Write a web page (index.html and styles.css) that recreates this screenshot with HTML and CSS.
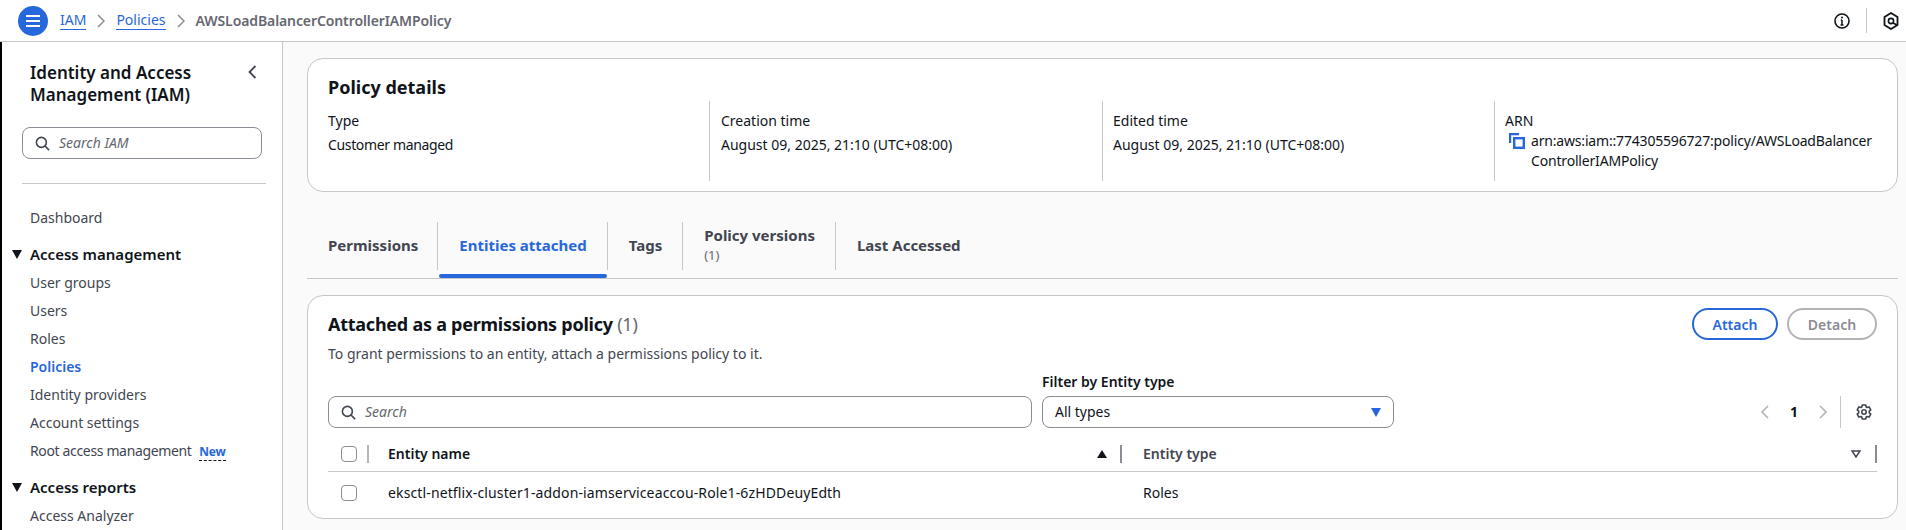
FILE: index.html
```html
<!DOCTYPE html>
<html lang="en">
<head>
  <meta charset="UTF-8">
  <meta name="viewport" content="width=device-width, initial-scale=1.0">
  <title>AWSLoadBalancerControllerIAMPolicy</title>
  <link rel="stylesheet" href="styles.css">
</head>
<body>

  <header class="topbar">
    <button class="menu-btn" aria-label="Menu">
      <svg width="16" height="14" viewBox="0 0 16 14"><path d="M1 2h14M1 7h14M1 12h14" stroke="#fff" stroke-width="2" fill="none"/></svg>
    </button>
    <nav class="crumbs">
      <a href="#">IAM</a>
      <svg width="8" height="14" viewBox="0 0 8 14"><path d="M1 1l6 6-6 6" stroke="#8c8c94" stroke-width="1.5" fill="none"/></svg>
      <a href="#">Policies</a>
      <svg width="8" height="14" viewBox="0 0 8 14"><path d="M1 1l6 6-6 6" stroke="#8c8c94" stroke-width="1.5" fill="none"/></svg>
      <span class="crumb-current">AWSLoadBalancerControllerIAMPolicy</span>
    </nav>
    <div class="top-tools">
      <svg width="16" height="16" viewBox="0 0 16 16"><circle cx="8" cy="8" r="7" stroke="#0f141a" stroke-width="1.6" fill="none"/><path d="M8 7v5M6.500 12h3M6.800 7H8" stroke="#0f141a" stroke-width="1.500" fill="none"/><circle cx="8" cy="4.500" r="1" fill="#0f141a"/></svg>
      <span class="tool-sep"></span>
      <svg width="16" height="18" viewBox="0 0 16 18"><path d="M8 1l6.500 4v8L8 17l-6.500-4V5z" stroke="#0f141a" stroke-width="1.800" fill="none"/><circle cx="8" cy="9" r="2.600" stroke="#0f141a" stroke-width="1.600" fill="none"/><path d="M10 11l4 2" stroke="#0f141a" stroke-width="1.600"/></svg>
    </div>
  </header>

  <div class="layout">
    <aside class="sidebar">
      <div class="side-head">
        <h2>Identity and Access Management (IAM)</h2>
        <svg class="side-close" width="9" height="14" viewBox="0 0 9 14"><path d="M7.500 1l-6 6 6 6" stroke="#424650" stroke-width="1.800" fill="none"/></svg>
      </div>
      <div class="side-search">
        <svg width="15" height="15" viewBox="0 0 16 16"><circle cx="6.800" cy="6.800" r="5.300" stroke="#424650" stroke-width="1.700" fill="none"/><path d="M10.700 10.700l4.300 4.300" stroke="#424650" stroke-width="1.700"/></svg>
        <span>Search IAM</span>
      </div>
      <hr class="side-rule">
      <a class="side-link side-dash" href="#">Dashboard</a>
      <div class="side-group"><span class="caret"></span>Access management</div>
      <a class="side-link" href="#">User groups</a>
      <a class="side-link" href="#">Users</a>
      <a class="side-link" href="#">Roles</a>
      <a class="side-link active" href="#">Policies</a>
      <a class="side-link" href="#">Identity providers</a>
      <a class="side-link" href="#">Account settings</a>
      <a class="side-link" href="#"><span class="tight">Root access management</span> <span class="new-tag">New</span></a>
      <div class="side-group"><span class="caret"></span>Access reports</div>
      <a class="side-link" href="#">Access Analyzer</a>
    </aside>

    <main class="content">
      <section class="card details">
        <h2>Policy details</h2>
        <div class="detail-cols">
          <div class="detail-col">
            <div class="detail-label">Type</div>
            <div class="tight">Customer managed</div>
          </div>
          <div class="detail-col">
            <div class="detail-label">Creation time</div>
            <div>August 09, 2025, 21:10 (UTC+08:00)</div>
          </div>
          <div class="detail-col">
            <div class="detail-label">Edited time</div>
            <div>August 09, 2025, 21:10 (UTC+08:00)</div>
          </div>
          <div class="detail-col">
            <div>ARN</div>
            <div class="arn-row">
              <svg width="16" height="16" viewBox="0 0 16 16"><path d="M1 10V1h9" stroke="#2767dc" stroke-width="2.400" fill="none"/><rect x="5.200" y="5.200" width="9.600" height="9.600" stroke="#2767dc" stroke-width="2.400" fill="#fff"/></svg>
              <span class="arn-text">arn:aws:iam::774305596727:policy/AWSLoadBalancer ControllerIAMPolicy</span>
            </div>
          </div>
        </div>
      </section>

      <div class="tabs">
        <a class="tab first" href="#">Permissions</a>
        <a class="tab active" href="#">Entities attached</a>
        <a class="tab" href="#">Tags</a>
        <a class="tab" href="#">Policy versions<small>(1)</small></a>
        <a class="tab" href="#">Last Accessed</a>
      </div>

      <section class="card entities">
        <div class="ent-head">
          <div>
            <h2>Attached as a permissions policy <span class="count">(1)</span></h2>
            <p>To grant permissions to an entity, attach a permissions policy to it.</p>
          </div>
          <div class="ent-actions">
            <button class="btn btn-primary">Attach</button>
            <button class="btn btn-off">Detach</button>
          </div>
        </div>

        <div class="filters">
          <div class="search-box">
            <svg width="15" height="15" viewBox="0 0 16 16"><circle cx="6.800" cy="6.800" r="5.300" stroke="#424650" stroke-width="1.700" fill="none"/><path d="M10.700 10.700l4.300 4.300" stroke="#424650" stroke-width="1.700"/></svg>
            <span>Search</span>
          </div>
          <div class="filter-type">
            <label>Filter by Entity type</label>
            <div class="select-box">
              <span>All types</span>
              <svg width="10" height="9" viewBox="0 0 10 9"><path d="M0 0h10L5 9z" fill="#2767dc"/></svg>
            </div>
          </div>
          <div class="pager">
            <svg width="8" height="14" viewBox="0 0 8 14"><path d="M7 1L1 7l6 6" stroke="#b4b4bb" stroke-width="1.600" fill="none"/></svg>
            <b>1</b>
            <svg width="8" height="14" viewBox="0 0 8 14"><path d="M1 1l6 6-6 6" stroke="#b4b4bb" stroke-width="1.600" fill="none"/></svg>
            <span class="pager-sep"></span>
            <svg class="gear" width="16" height="16" viewBox="0 0 16 16"><path d="M6.300 1h3.400l.5 2 .9.500 2-.6 1.700 2.900-1.500 1.400v1.600l1.500 1.400-1.700 2.900-2-.6-.9.500-.5 2H6.300l-.5-2-.9-.5-2 .6L1.200 10.200l1.500-1.400V7.200L1.200 5.800l1.700-2.900 2 .6.900-.5z" stroke="#424650" stroke-width="1.600" fill="none" stroke-linejoin="round"/><circle cx="8" cy="8" r="2.200" stroke="#424650" stroke-width="1.600" fill="none"/></svg>
          </div>
        </div>

        <div class="table">
          <div class="row row-head">
            <div class="cell-check"><span class="check"></span><span class="col-sep"></span></div>
            <div class="cell-name">
              <span>Entity name</span>
              <svg width="10" height="8" viewBox="0 0 10 8"><path d="M5 0l5 8H0z" fill="#0f141a"/></svg>
              <span class="col-sep"></span>
            </div>
            <div class="cell-type">
              <span>Entity type</span>
              <svg width="10" height="8" viewBox="0 0 10 8"><path d="M1 1h8L5 7z" stroke="#424650" stroke-width="1.500" fill="none"/></svg>
              <span class="col-sep"></span>
            </div>
          </div>
          <div class="row row-body">
            <div class="cell-check"><span class="check"></span></div>
            <div class="cell-name entity-link">eksctl-netflix-cluster1-addon-iamserviceaccou-Role1-6zHDDeuyEdth</div>
            <div class="cell-type">Roles</div>
          </div>
        </div>
      </section>
    </main>
  </div>

</body>
</html>
```

FILE: styles.css
```css
* {
  box-sizing: border-box;
}
html, body {
  height: 100%;
}
body {
  margin: 0;
  overflow: hidden;
  font-family: "Noto Sans", Arial, sans-serif;
  font-size: 14px;
  line-height: 20px;
  color: #0f141a;
  background-color: #fff;
}
a {
  text-decoration: none;
  color: inherit;
}
h2, p {
  margin: 0;
}
.tight {
  letter-spacing: -0.35px;
}

/* top bar */
.topbar {
  display: flex;
  align-items: center;
  height: 42px;
  padding-left: 18px;
  background-color: #fff;
  border-bottom: 1px solid #c6c6cd;
}
.menu-btn {
  display: flex;
  align-items: center;
  justify-content: center;
  width: 30px;
  height: 30px;
  padding: 0;
  border: none;
  border-radius: 50%;
  background-color: #2767dc;
}
.crumbs {
  display: flex;
  align-items: center;
  gap: 11px;
  margin-left: 12px;
}
.crumbs a {
  color: #2767dc;
  border-bottom: 1px solid #2767dc;
  line-height: 18px;
}
.crumb-current {
  font-weight: 600;
  letter-spacing: -0.1px;
  color: #656871;
}
.top-tools {
  display: flex;
  align-items: center;
  gap: 16px;
  margin-left: auto;
  margin-right: 7px;
}
.tool-sep {
  width: 1px;
  height: 25px;
  background-color: #c6c6cd;
}

/* page columns */
.layout {
  display: flex;
  height: 488px;
  border-left: 2px solid #000;
}
.sidebar {
  flex: 0 0 281px;
  height: 488px;
  overflow: hidden;
  padding: 20px 16px 0 20px;
  background-color: #fff;
  border-right: 1px solid #c6c6cd;
}
.content {
  flex: 1;
  min-width: 0;
  padding: 16px 8px 0 24px;
  background-color: #fafafa;
}

/* sidebar */
.side-head {
  display: flex;
  justify-content: space-between;
  padding-left: 8px;
  padding-right: 9px;
}
.side-head h2 {
  width: 200px;
  font-size: 17px;
  line-height: 22px;
  font-weight: 600;
}
.side-close {
  margin-top: 3px;
}
.side-search {
  display: flex;
  align-items: center;
  gap: 9px;
  width: 240px;
  height: 32px;
  margin-top: 21px;
  padding-left: 12px;
  border: 1px solid #8c8c94;
  border-radius: 8px;
  font-style: italic;
  color: #656871;
}
.side-rule {
  width: 244px;
  height: 1px;
  margin: 24px 0 0;
  border: none;
  background-color: #c6c6cd;
}
.side-link {
  display: block;
  height: 28px;
  line-height: 28px;
  padding-left: 8px;
  color: #424650;
  white-space: nowrap;
}
.side-dash {
  margin-top: 20px;
}
.side-link.active {
  color: #2767dc;
  font-weight: 600;
}
.side-group {
  position: relative;
  height: 30px;
  margin-top: 7px;
  padding-left: 8px;
  line-height: 30px;
  font-size: 15px;
  font-weight: 600;
}
.caret {
  position: absolute;
  left: -10px;
  top: 11px;
  width: 0;
  height: 0;
  border-left: 5px solid transparent;
  border-right: 5px solid transparent;
  border-top: 9px solid #0f141a;
}
.new-tag {
  display: inline-block;
  margin-left: 4px;
  font-size: 12px;
  font-weight: 700;
  letter-spacing: -0.2px;
  line-height: 16px;
  color: #2767dc;
  border-bottom: 1px dashed #0f141a;
}

/* cards */
.card {
  background-color: #fff;
  border: 1px solid #c6c6cd;
  border-radius: 16px;
}
.details {
  height: 134px;
  padding: 16px 20px 0;
}
.details h2,
.ent-head h2 {
  font-size: 18px;
  line-height: 24px;
  font-weight: 700;
}
.ent-head h2 {
  letter-spacing: -0.25px;
}
.detail-cols {
  display: grid;
  grid-template-columns: 381px 393px 392px 1fr;
  height: 80px;
  margin-top: 2px;
}
.detail-col {
  padding: 10px 0 0 11px;
  border-left: 1px solid #c6c6cd;
}
.detail-col:first-child {
  padding-left: 0;
  border-left: none;
}
.detail-col:nth-child(n+3) {
  padding-left: 10px;
}
.detail-label {
  margin-bottom: 4px;
}
.arn-row {
  display: flex;
  gap: 6px;
  padding-left: 4px;
}
.arn-row svg {
  flex: none;
  margin-top: 2px;
}
.arn-text {
  width: 340px;
  letter-spacing: -0.18px;
}

/* tabs */
.tabs {
  display: flex;
  align-items: stretch;
  height: 58px;
  margin-top: 29px;
  padding-top: 1px;
  border-bottom: 1px solid #c6c6cd;
}
.tab {
  position: relative;
  display: flex;
  flex-direction: column;
  justify-content: center;
  height: 48px;
  padding: 0 20px 2px 21px;
  border-left: 1px solid #c6c6cd;
  font-size: 15px;
  font-weight: 700;
  color: #424650;
}
.tab.first {
  padding-left: 21px;
  padding-right: 19px;
  border-left: none;
}
.tab.active {
  color: #2767dc;
}
.tab.active::after {
  content: "";
  position: absolute;
  left: 1px;
  right: 0;
  top: 52px;
  height: 4px;
  border-radius: 2px;
  background-color: #2767dc;
}
.tab small {
  font-size: 13px;
  line-height: 20px;
  font-weight: 400;
  color: #656871;
}

/* entities card */
.entities {
  height: 224px;
  margin-top: 16px;
  padding: 16px 20px 0;
}
.ent-head {
  display: flex;
  justify-content: space-between;
}
.count {
  font-weight: 400;
  color: #656871;
}
.ent-head p {
  margin-top: 8px;
  color: #424650;
}
.ent-actions {
  display: flex;
  gap: 9px;
  margin-top: -4px;
}
.btn {
  height: 32px;
  padding: 0;
  background-color: #fff;
  border-radius: 20px;
  font: 600 14px "Noto Sans", Arial, sans-serif;
}
.btn-primary {
  width: 86px;
  color: #2767dc;
  border: 2px solid #2767dc;
}
.btn-off {
  width: 90px;
  color: #8c8c94;
  border: 2px solid #b4b4bb;
}
.filters {
  display: flex;
  align-items: flex-end;
  margin-top: 8px;
}
.search-box {
  display: flex;
  align-items: center;
  gap: 9px;
  width: 704px;
  height: 32px;
  padding-left: 12px;
  border: 1px solid #8c8c94;
  border-radius: 8px;
  font-style: italic;
  color: #656871;
}
.filter-type {
  width: 352px;
  margin-left: 10px;
}
.filter-type label {
  display: block;
  margin-bottom: 4px;
  font-weight: 600;
  color: #0f141a;
}
.select-box {
  display: flex;
  align-items: center;
  justify-content: space-between;
  height: 32px;
  padding: 0 12px;
  border: 1px solid #8c8c94;
  border-radius: 8px;
}
.pager {
  display: flex;
  align-items: center;
  height: 32px;
  margin-left: auto;
}
.pager b {
  width: 50px;
  text-align: center;
}
.pager-sep {
  width: 1px;
  height: 32px;
  margin: 0 15px 0 13px;
  background-color: #c6c6cd;
}
.gear {
  margin-right: 5px;
}

/* table */
.table {
  margin-top: 9px;
}
.row {
  display: flex;
  align-items: center;
}
.row-head {
  height: 35px;
  border-bottom: 1px solid #c6c6cd;
  font-weight: 600;
  color: #424650;
}
.row-body {
  height: 42px;
}
.cell-check {
  display: flex;
  align-items: center;
  flex: 0 0 60px;
  padding-left: 13px;
}
.check {
  width: 16px;
  height: 16px;
  border: 1px solid #8c8c94;
  border-radius: 4px;
}
.col-sep {
  width: 2px;
  height: 18px;
  background-color: #b4b4bb;
}
.cell-check .col-sep {
  margin-left: 10px;
}
.cell-name {
  display: flex;
  align-items: center;
  flex: 0 0 734px;
  color: #0f141a;
}
.entity-link {
  letter-spacing: 0.13px;
}
.row-head .cell-name span:first-child {
  flex: 1;
}
.row-head .cell-name .col-sep {
  margin-left: 13px;
  background-color: #8c8c94;
}
.cell-type {
  display: flex;
  align-items: center;
  flex: 1;
  padding-left: 21px;
}
.row-head .cell-type span:first-child {
  flex: 1;
}
.row-head .cell-type .col-sep {
  margin-left: 14px;
  background-color: #8c8c94;
}
```
